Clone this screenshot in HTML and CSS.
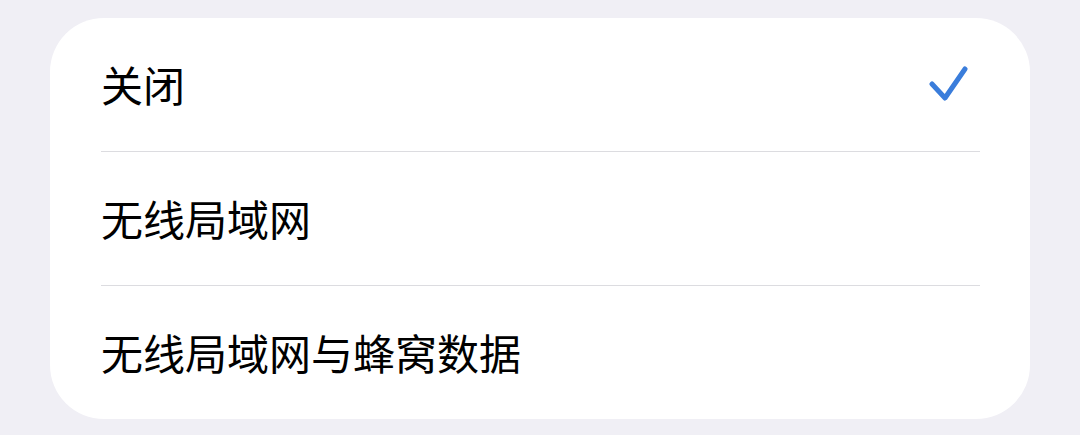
FILE: index.html
```html
<!DOCTYPE html>
<html lang="zh-CN">
<head>
    <meta charset="UTF-8">
    <meta name="viewport" content="width=device-width, initial-scale=1.0">
    <title>自动播放视频</title>
    <link rel="stylesheet" href="styles.css">
</head>
<body>
    <div class="option-group">
        <div class="option-row">
            <div class="option-inner">
                <span class="option-label">关闭</span>
                <svg class="check-icon" width="40" height="40" viewBox="0 0 40 40">
                    <path d="M4 20 L17 34 L37 5" fill="none" stroke="#3a7ddb" stroke-width="5" stroke-linecap="round" stroke-linejoin="round"/>
                </svg>
            </div>
        </div>
        <div class="option-row">
            <div class="option-inner">
                <span class="option-label">无线局域网</span>
            </div>
        </div>
        <div class="option-row last">
            <div class="option-inner">
                <span class="option-label">无线局域网与蜂窝数据</span>
            </div>
        </div>
    </div>
</body>
</html>
```

FILE: styles.css
```css
/* Page */
body {
    margin: 0;
    padding: 18px 50px 15px;
    background-color: #f0eff5;
    font-family: "Noto Sans CJK SC", "Noto Sans", sans-serif;
    color: #000;
}

/* Grouped list card */
.option-group {
    background-color: #fff;
    border-radius: 54px;
    overflow: hidden;
}

.option-row {
    padding-left: 51px;
}

.option-inner {
    height: 133px;
    margin-right: 50px;
    padding-right: 12px;
    display: flex;
    align-items: center;
    justify-content: space-between;
    border-bottom: 1.5px solid #dcdce0;
}

.option-row.last .option-inner {
    border-bottom: none;
}

.option-label {
    font-size: 42px;
    line-height: 1;
    margin-top: -2px;
}

.check-icon {
    display: block;
    margin-top: -2px;
}
```
